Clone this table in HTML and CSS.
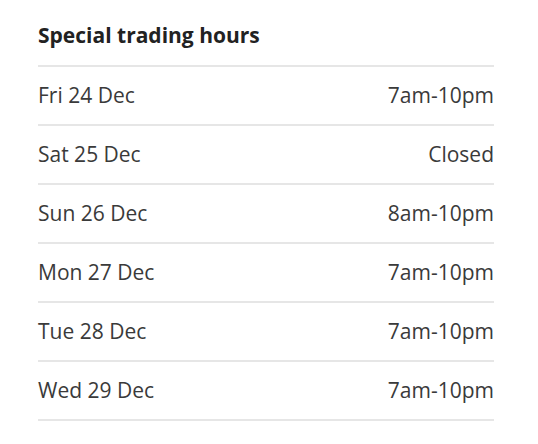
FILE: index.html
```html
<!DOCTYPE html>
<html lang="en">
<head>
<meta charset="utf-8">
<title>Special trading hours</title>
<link rel="stylesheet" href="styles.css">
</head>
<body>
<section class="hours">
  <h2 class="hours-title">Special trading hours</h2>
  <ul class="hours-list">
    <li class="hours-row"><span class="day">Fri 24 Dec</span><span class="time">7am-10pm</span></li>
    <li class="hours-row"><span class="day">Sat 25 Dec</span><span class="time">Closed</span></li>
    <li class="hours-row"><span class="day">Sun 26 Dec</span><span class="time">8am-10pm</span></li>
    <li class="hours-row"><span class="day">Mon 27 Dec</span><span class="time">7am-10pm</span></li>
    <li class="hours-row"><span class="day">Tue 28 Dec</span><span class="time">7am-10pm</span></li>
    <li class="hours-row"><span class="day">Wed 29 Dec</span><span class="time">7am-10pm</span></li>
  </ul>
</section>
</body>
</html>
```
FILE: styles.css
```css
body {
  margin: 0;
  background: #fff;
  font-family: "Open Sans", "Noto Sans", sans-serif;
}
.hours {
  width: 456px;
  padding: 20px 0 0 38px;
}
.hours-title {
  margin: 0 0 15px;
  font-size: 21px;
  line-height: 30px;
  font-weight: 700;
  color: #222;
}
.hours-list {
  list-style: none;
  margin: 0;
  padding: 0;
  border-top: 2px solid #e6e6e6;
}
.hours-row {
  display: flex;
  justify-content: space-between;
  height: 57px;
  line-height: 57px;
  font-size: 21px;
  color: #3a3a3a;
  border-bottom: 2px solid #e6e6e6;
}
```
